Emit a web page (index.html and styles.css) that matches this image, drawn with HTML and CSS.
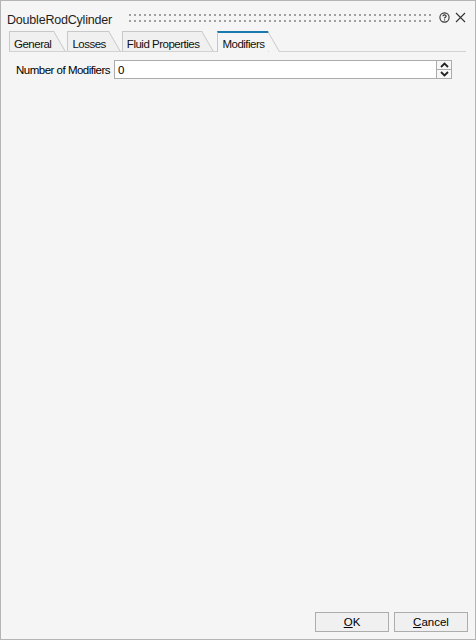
FILE: index.html
```html
<html>
	<head>
		<title>DoubleRodCylinder</title>
		<link rel="stylesheet" href="styles.css">
	</head>
	<body>
		<div class="window">
			<div class="titlebar">
				<span class="title">DoubleRodCylinder</span>
				<div class="grip"></div>
				<svg class="tb-icon" width="11" height="11" viewBox="0 0 11 11">
					<circle cx="5.5" cy="5.5" r="4.6" fill="none" stroke="#333" stroke-width="1.1"/>
					<path d="M3.9 4.3 C3.9 2.4 7.1 2.4 7.1 4.2 C7.1 5.3 5.5 5.3 5.5 6.6" fill="none" stroke="#333" stroke-width="1.1"/>
					<rect x="5" y="7.4" width="1.1" height="1.1" fill="#333"/>
				</svg>
				<svg class="tb-icon close" width="11" height="11" viewBox="0 0 11 11">
					<path d="M1 1 L10 10 M10 1 L1 10" stroke="#333" stroke-width="1.1"/>
				</svg>
			</div>
			<div class="tabs">
				<div class="tab">General</div>
				<div class="tab">Losses</div>
				<div class="tab">Fluid Properties</div>
				<div class="tab active">Modifiers</div>
			</div>
			<div class="field">
				<label>Number of Modifiers</label>
				<div class="spin-input">
					<input type="text" value="0">
					<div class="spinner">
						<button><svg width="9" height="6" viewBox="0 0 9 6"><path d="M1 5 L4.5 1.5 L8 5" fill="none" stroke="#222" stroke-width="1.8"/></svg></button>
						<button><svg width="9" height="6" viewBox="0 0 9 6"><path d="M1 1 L4.5 4.5 L8 1" fill="none" stroke="#222" stroke-width="1.8"/></svg></button>
					</div>
				</div>
			</div>
			<div class="footer">
				<button class="btn"><u>O</u>K</button>
				<button class="btn"><u>C</u>ancel</button>
			</div>
		</div>
	</body>
</html>
```
FILE: styles.css
```css
body {
	margin: 0;
	font-family: "Liberation Sans", Arial, sans-serif;
	font-size: 11.5px;
	letter-spacing: -0.5px;
	color: #000;
}
.window {
	width: 476px;
	height: 640px;
	box-sizing: border-box;
	border: 1px solid #b4b4b4;
	background: #f5f5f5;
	display: flex;
	flex-direction: column;
}
.titlebar {
	display: flex;
	align-items: center;
	height: 23px;
	padding: 7px 9px 0 6px;
}
.title {
	font-size: 12.5px;
	letter-spacing: -0.2px;
	color: #1e1e1e;
}
.grip {
	flex: 1;
	align-self: flex-start;
	margin: 6px 8px 0 17px;
	height: 8px;
	background-image: linear-gradient(90deg, #a0a0a0 2px, transparent 2px), linear-gradient(90deg, #a0a0a0 2px, transparent 2px);
	background-size: 5px 2px;
	background-position: 0 0, 0 6px;
	background-repeat: repeat-x;
}
.tb-icon {
	align-self: flex-start;
	margin-top: 4px;
}
.tb-icon.close {
	margin-left: 5px;
}
.tabs {
	display: flex;
	position: relative;
	z-index: 0;
	margin: 0 9px 0 8px;
	height: 20px;
	border-bottom: 1px solid #d2d2d2;
}
.tab {
	position: relative;
	margin-right: 13px;
	padding: 5px 3px 0 4px;
	line-height: 14px;
	border: 1px solid #c8c8c8;
	border-right: none;
	border-bottom: none;
	background: #f0f0f0;
	color: #111;
}
.tab::after {
	content: '';
	position: absolute;
	z-index: -1;
	top: -1px;
	bottom: 0;
	right: 0;
	width: 10px;
	border-top: 1px solid #c8c8c8;
	border-right: 1px solid #c8c8c8;
	background: #f0f0f0;
	transform: skewX(30deg);
	transform-origin: top right;
}
.tab.active {
	margin-left: 2px;
	margin-bottom: -1px;
	padding-top: 4px;
	border-top: 2px solid #1a7ab0;
	background: #f5f5f5;
}
.tab.active::after {
	top: -2px;
	bottom: 0;
	border-top: 2px solid #1a7ab0;
	background: #f5f5f5;
}
.field {
	display: flex;
	align-items: center;
	margin-top: 8px;
	padding: 0 23px 0 15px;
}
.field label {
	margin-right: 4px;
}
.spin-input {
	flex: 1;
	display: flex;
	height: 19px;
}
.spin-input input {
	flex: 1;
	min-width: 0;
	margin: 0;
	height: 19px;
	box-sizing: border-box;
	border: 1px solid #ababab;
	padding: 0 3px;
	font: inherit;
	outline: none;
	background: #fff;
}
.spinner {
	display: flex;
	flex-direction: column;
	width: 15px;
	box-sizing: border-box;
	border: 1px solid #ababab;
	border-left: none;
}
.spinner button {
	flex: 1;
	margin: 0;
	padding: 0;
	border: none;
	background: #f7f7f7;
	display: flex;
	align-items: center;
	justify-content: center;
}
.spinner button + button {
	border-top: 1px solid #ababab;
}
.footer {
	margin-top: auto;
	display: flex;
	justify-content: flex-end;
	gap: 5px;
	padding: 0 7px 7px 0;
}
.btn {
	width: 74px;
	height: 20px;
	margin: 0;
	padding: 0;
	border: 1px solid #adadad;
	background: #f0f0f0;
	font: inherit;
	color: #000;
}
```
